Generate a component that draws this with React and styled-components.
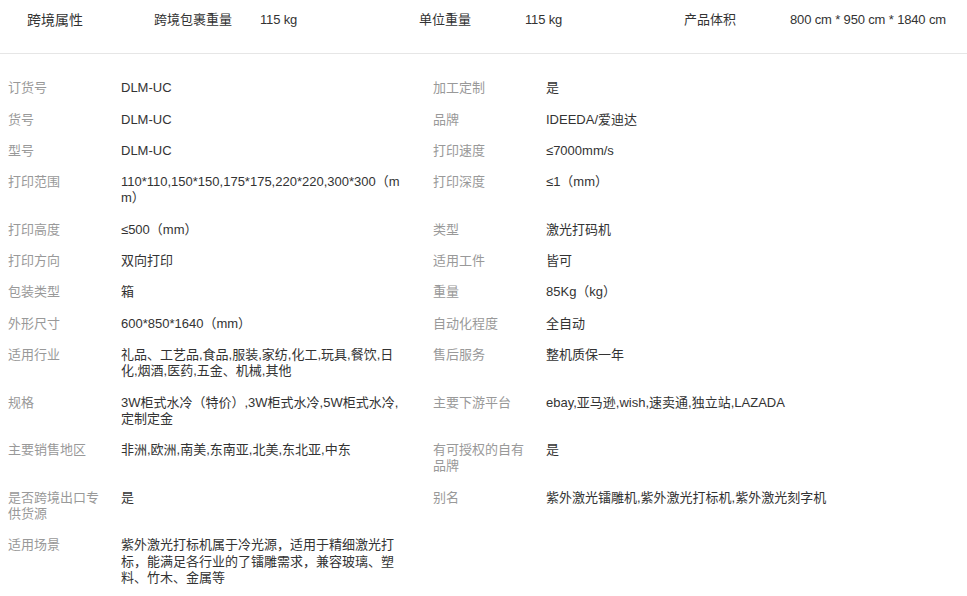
import React from "react";
import styled, { createGlobalStyle } from "styled-components";

const Global = createGlobalStyle`
  html, body { margin: 0; padding: 0; background: #fff; }
  body {
    font-family: "Liberation Sans", Arial, "Noto Sans CJK SC", sans-serif;
    color: #333;
  }
`;

const Page = styled.div`
  width: 967px;
`;

const Header = styled.div`
  display: flex;
  align-items: flex-start;
  box-sizing: border-box;
  height: 54px;
  padding-top: 12px;
  border-bottom: 1px solid #e6e6e6;
`;

const HeaderTitle = styled.div`
  width: 154px;
  box-sizing: border-box;
  padding-left: 27px;
  font-size: 14px;
  line-height: 16px;
  color: #333;
`;

const HeaderGroup = styled.div`
  display: flex;
  width: 265px;
  font-size: 13px;
  line-height: 16px;
  white-space: nowrap;
`;

const HeaderLabel = styled.div`
  width: 106px;
  flex: none;
  color: #333;
`;

const HeaderValue = styled.div`
  color: #333;
  letter-spacing: -0.15px;
`;

const Table = styled.div`
  margin-top: 19.25px;
  display: flex;
  flex-direction: column;
`;

const Row = styled.div`
  display: grid;
  grid-template-columns: 113px 312px 113px 1fr;
  font-size: 13px;
  line-height: 16.3px;
`;

const Label = styled.div`
  box-sizing: border-box;
  padding: 7px 10px 8px 8px;
  color: #999;
`;

const Value = styled.div`
  box-sizing: border-box;
  padding: 7px 24px 8px 8px;
  color: #333;
  word-break: break-all;
`;

const rows = [
  ["订货号", "DLM-UC", "加工定制", "是"],
  ["货号", "DLM-UC", "品牌", "IDEEDA/爱迪达"],
  ["型号", "DLM-UC", "打印速度", "≤7000mm/s"],
  ["打印范围", "110*110,150*150,175*175,220*220,300*300（mm）", "打印深度", "≤1（mm）"],
  ["打印高度", "≤500（mm）", "类型", "激光打码机"],
  ["打印方向", "双向打印", "适用工件", "皆可"],
  ["包装类型", "箱", "重量", "85Kg（kg）"],
  ["外形尺寸", "600*850*1640（mm）", "自动化程度", "全自动"],
  ["适用行业", "礼品、工艺品,食品,服装,家纺,化工,玩具,餐饮,日化,烟酒,医药,五金、机械,其他", "售后服务", "整机质保一年"],
  ["规格", "3W柜式水冷（特价）,3W柜式水冷,5W柜式水冷,定制定金", "主要下游平台", "ebay,亚马逊,wish,速卖通,独立站,LAZADA"],
  ["主要销售地区", "非洲,欧洲,南美,东南亚,北美,东北亚,中东", "有可授权的自有品牌", "是"],
  ["是否跨境出口专供货源", "是", "别名", "紫外激光镭雕机,紫外激光打标机,紫外激光刻字机"],
  ["适用场景", "紫外激光打标机属于冷光源，适用于精细激光打标，能满足各行业的了镭雕需求，兼容玻璃、塑料、竹木、金属等", "", ""],
];

const headerItems = [
  ["跨境包裹重量", "115 kg"],
  ["单位重量", "115 kg"],
  ["产品体积", "800 cm * 950 cm * 1840 cm"],
];

export default function App() {
  return (
    <Page>
      <Global />
      <Header>
        <HeaderTitle>跨境属性</HeaderTitle>
        {headerItems.map(([l, v]) => (
          <HeaderGroup key={l}>
            <HeaderLabel>{l}</HeaderLabel>
            <HeaderValue>{v}</HeaderValue>
          </HeaderGroup>
        ))}
      </Header>
      <Table>
        {rows.map((r, i) => (
          <Row key={i}>
            <Label>{r[0]}</Label>
            <Value>{r[1]}</Value>
            <Label>{r[2]}</Label>
            <Value>{r[3]}</Value>
          </Row>
        ))}
      </Table>
    </Page>
  );
}
